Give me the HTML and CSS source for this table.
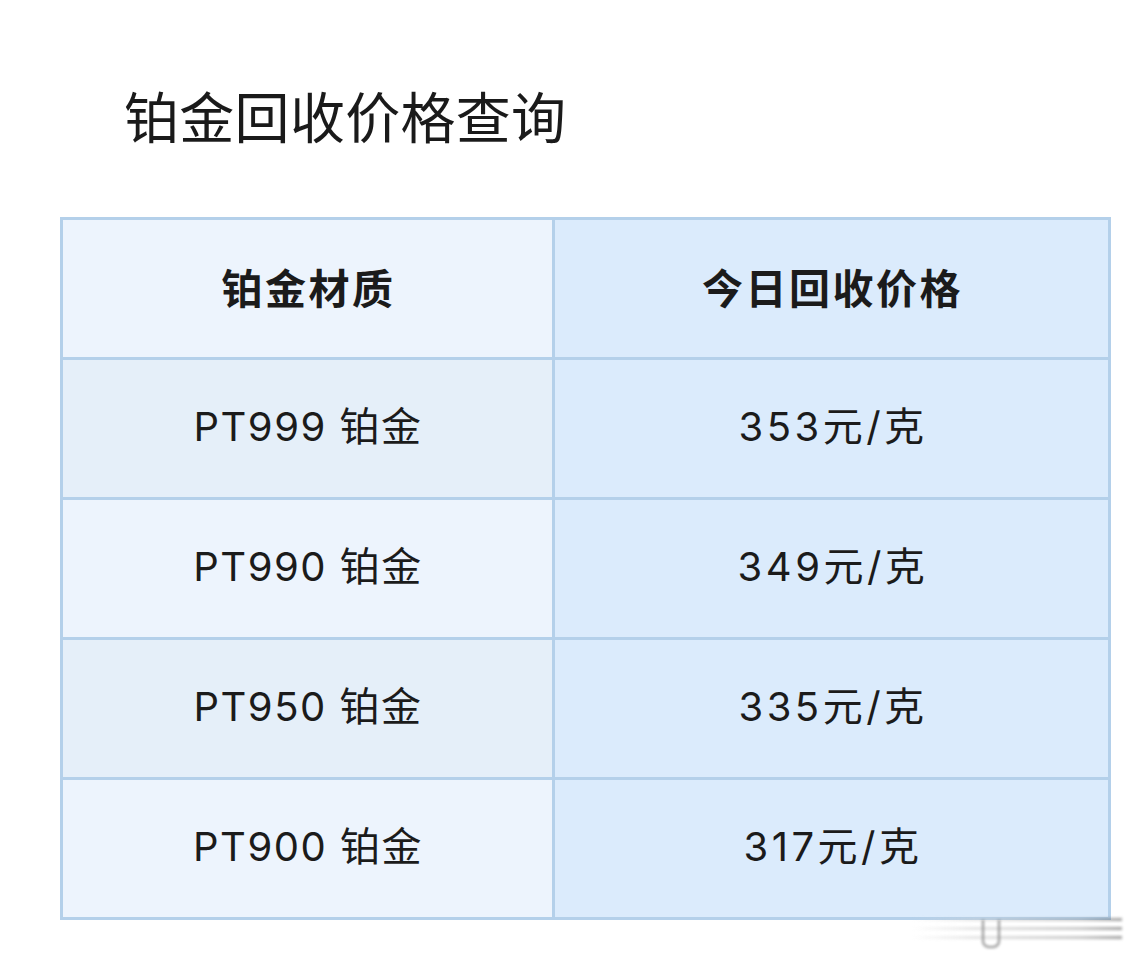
FILE: index.html
```html
<!DOCTYPE html>
<html lang="zh">
<head>
<meta charset="utf-8">
<title>铂金回收价格查询</title>
<link rel="stylesheet" href="styles.css">
</head>
<body>
<div class="page">
  <h1 class="title">铂金回收价格查询</h1>
  <table class="price-table">
    <thead>
      <tr>
        <th class="col-a">铂金材质</th>
        <th class="col-b">今日回收价格</th>
      </tr>
    </thead>
    <tbody>
      <tr class="odd"><td class="col-a">PT999 铂金</td><td class="col-b">353元/克</td></tr>
      <tr class="even"><td class="col-a">PT990 铂金</td><td class="col-b">349元/克</td></tr>
      <tr class="odd"><td class="col-a">PT950 铂金</td><td class="col-b">335元/克</td></tr>
      <tr class="even"><td class="col-a">PT900 铂金</td><td class="col-b">317元/克</td></tr>
    </tbody>
  </table>
  <div class="watermark">
    <span class="wm-line"></span>
    <span class="wm-line"></span>
    <span class="wm-line"></span>
    <span class="wm-u"></span>
  </div>
</div>
</body>
</html>
```
FILE: styles.css
```css
html, body {
  margin: 0;
  padding: 0;
  background: #ffffff;
}
body {
  font-family: "Noto Sans CJK SC", "Noto Sans", sans-serif;
  color: #1b1b1b;
}
.page {
  position: relative;
  width: 1148px;
  height: 973px;
  padding-top: 82px;
  box-sizing: border-box;
}
.title {
  margin: 0 0 0 124px;
  font-size: 55px;
  font-weight: 400;
  line-height: 64px;
  letter-spacing: 0.3px;
  color: #1a1a1a;
}
.price-table {
  margin: 71px 0 0 60px;
  width: 1051px;
  border-collapse: collapse;
  table-layout: fixed;
}
.price-table th,
.price-table td {
  border: 3px solid #b4d0ea;
  height: 133px;
  padding: 0 0 4px 0;
  text-align: center;
  vertical-align: middle;
  font-size: 40px;
  line-height: 1;
}
.price-table th {
  font-size: 41px;
  font-weight: 700;
  letter-spacing: 2.5px;
  text-indent: 2px;
}
.price-table td {
  font-weight: 400;
  font-family: Inter, "Noto Sans CJK SC", sans-serif;
}
.price-table td.col-a {
  letter-spacing: 1.5px;
  text-indent: 1px;
}
.price-table td.col-b {
  letter-spacing: 3.5px;
  text-indent: 3px;
}
.col-a { width: 489px; }
thead .col-a { background: #edf4fd; }
.col-b { background: #dbebfc; }
.odd .col-a { background: #e5eff9; }
.even .col-a { background: #edf4fd; }
.watermark {
  position: absolute;
  left: 912px;
  top: 912px;
  width: 210px;
  height: 38px;
  filter: blur(1.5px);
  opacity: 0.55;
}
.wm-line {
  display: block;
  height: 3px;
  margin-top: 6px;
  background: linear-gradient(90deg, rgba(200,200,200,0) 0%, #cfcfcf 30%, #9a9a9a 80%, #555 100%);
}
.wm-u {
  position: absolute;
  left: 70px;
  top: 8px;
  width: 14px;
  height: 26px;
  border: 2px solid #333;
  border-top: none;
  border-radius: 0 0 7px 7px;
}
```
